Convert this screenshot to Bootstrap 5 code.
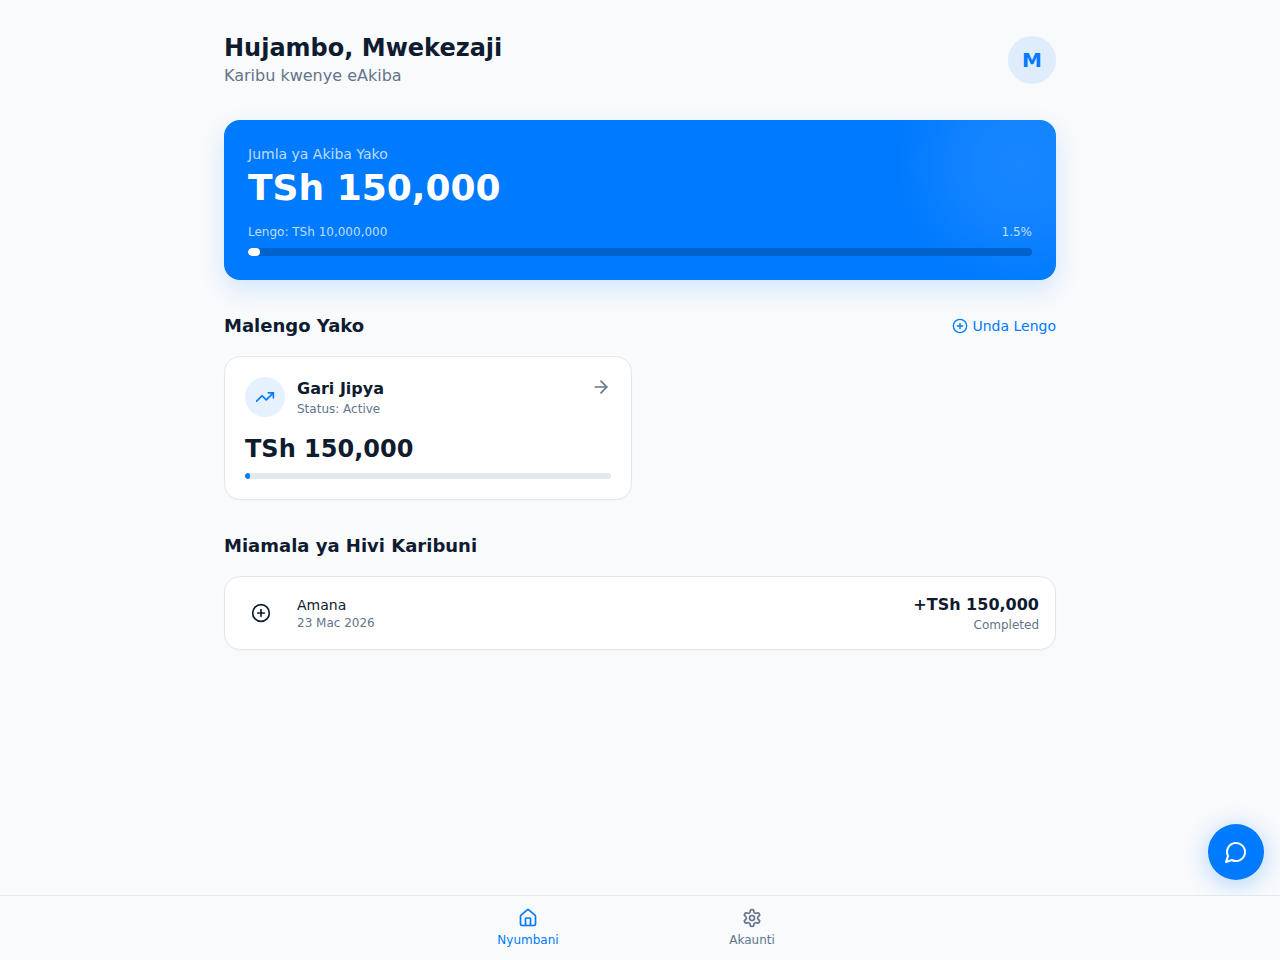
<!DOCTYPE html>
<html lang="sw">
<head>
  <meta charset="UTF-8" />
  <meta name="viewport" content="width=device-width, initial-scale=1.0"/>
  <title>eAkiba</title>
  <link href="https://cdn.jsdelivr.net/npm/bootstrap@5.3.0/dist/css/bootstrap.min.css" rel="stylesheet">
  <style>
    body {
      background-color: #f8fafc;
      color: #0f1b2f;
      font-family: "DejaVu Sans", sans-serif;
      min-height: 100vh;
    }

    .page-wrap { max-width: 880px; margin: 0 auto; padding: 32px 24px 96px; }
    .text-soft { color: #64748b; }
    .text-brand { color: #007aff; }

    .page-title { font-size: 24px; line-height: 32px; font-weight: 700; margin: 0; }
    .page-sub { font-size: 16px; line-height: 24px; }

    .avatar-circle {
      width: 48px; height: 48px; border-radius: 50%;
      background-color: rgba(0, 122, 255, .1);
      color: #007aff; font-size: 20px; font-weight: 700;
    }

    .hero-card {
      height: 160px; padding: 24px; margin-top: 32px;
      border-radius: 16px; color: #fff;
      background: radial-gradient(circle at 796px 45px, rgba(255,255,255,.09) 0, rgba(255,255,255,.08) 45px, rgba(255,255,255,0) 125px), #007aff;
      box-shadow: 0 10px 25px rgba(0, 122, 255, .15);
    }
    .hero-label { font-size: 14px; line-height: 20px; color: rgba(255,255,255,.75); }
    .hero-amount { font-size: 36px; line-height: 48px; font-weight: 700; margin-bottom: 11px; }
    .hero-meta { font-size: 12px; line-height: 18px; color: rgba(255,255,255,.75); margin-bottom: 7px; }
    .hero-bar { height: 8px; background-color: #0062cc; border-radius: 4px; overflow: hidden; }
    .hero-bar div { height: 100%; background-color: #fff; border-radius: 4px; }

    .section-head { font-size: 18px; line-height: 28px; font-weight: 700; margin: 0; }
    .section-row { margin-top: 32px; margin-bottom: 16px; }
    .add-link { font-size: 14px; color: #007aff; text-decoration: none; }

    .goal-grid { display: grid; grid-template-columns: repeat(2, 1fr); gap: 16px; }
    .goal-card, .tx-card {
      background-color: #fff; border: 1px solid #e2e8f0; border-radius: 16px;
      box-shadow: 0 1px 2px rgba(0,0,0,.03);
    }
    .goal-card { padding: 20px; height: 144px; }
    .goal-icon {
      width: 40px; height: 40px; border-radius: 50%;
      background-color: rgba(0, 122, 255, .1); color: #007aff;
    }
    .goal-name { font-size: 16px; line-height: 24px; font-weight: 700; }
    .goal-status { font-size: 12px; line-height: 16px; color: #64748b; }
    .goal-amount { font-size: 24px; line-height: 32px; font-weight: 700; margin-top: 16px; margin-bottom: 8px; }
    .goal-bar { height: 6px; background-color: #e2e8f0; border-radius: 3px; overflow: hidden; }
    .goal-bar div { height: 100%; background-color: #007aff; border-radius: 3px; }

    .tx-card { padding: 16px; height: 74px; }
    .tx-icon { width: 40px; height: 40px; }
    .tx-name { font-size: 14px; line-height: 20px; }
    .tx-date { font-size: 12px; line-height: 16px; color: #64748b; }
    .tx-amount { font-size: 16px; line-height: 24px; font-weight: 700; }
    .tx-state { font-size: 12px; line-height: 16px; color: #64748b; }

    .bottom-bar { height: 65px; background-color: #f8fafc; border-top: 1px solid #e2e8f0; }
    .bottom-inner { max-width: 448px; margin: 0 auto; height: 100%; }
    .bottom-item { flex: 1 1 0; font-size: 12px; line-height: 16px; text-decoration: none; gap: 4px; padding-top: 12px; }

    .chat-fab {
      right: 16px; bottom: 80px; width: 56px; height: 56px; padding: 0;
      border: 0; border-radius: 50%;
      background-color: #007aff; color: #fff;
      box-shadow: 0 4px 24px rgba(0, 122, 255, .3);
    }
  </style>
</head>
<body>
  <div class="page-wrap">
    <header class="d-flex justify-content-between align-items-center">
      <div>
        <h1 class="page-title">Hujambo, Mwekezaji</h1>
        <div class="page-sub text-soft">Karibu kwenye eAkiba</div>
      </div>
      <div class="avatar-circle d-flex align-items-center justify-content-center">M</div>
    </header>

    <section class="hero-card">
      <div class="hero-label">Jumla ya Akiba Yako</div>
      <div class="hero-amount">TSh 150,000</div>
      <div class="hero-meta d-flex justify-content-between">
        <span>Lengo: TSh 10,000,000</span>
        <span>1.5%</span>
      </div>
      <div class="hero-bar"><div style="width: 1.5%"></div></div>
    </section>

    <div class="section-row d-flex justify-content-between align-items-center">
      <h2 class="section-head">Malengo Yako</h2>
      <a href="#" class="add-link d-flex align-items-center gap-1">
        <svg width="16" height="16" viewBox="0 0 24 24" fill="none" stroke="currentColor" stroke-width="2" stroke-linecap="round" stroke-linejoin="round"><circle cx="12" cy="12" r="10"/><path d="M8 12h8"/><path d="M12 8v8"/></svg>
        Unda Lengo
      </a>
    </div>

    <div class="goal-grid">
      <div class="goal-card">
        <div class="d-flex justify-content-between align-items-start">
          <div class="d-flex gap-2 align-items-center">
            <div class="goal-icon d-flex align-items-center justify-content-center me-1">
              <svg width="20" height="20" viewBox="0 0 24 24" fill="none" stroke="currentColor" stroke-width="2" stroke-linecap="round" stroke-linejoin="round"><path d="M16 7h6v6"/><path d="m22 7-8.5 8.5-5-5L2 17"/></svg>
            </div>
            <div>
              <div class="goal-name">Gari Jipya</div>
              <div class="goal-status">Status: Active</div>
            </div>
          </div>
          <svg class="text-soft" width="20" height="20" viewBox="0 0 24 24" fill="none" stroke="currentColor" stroke-width="2" stroke-linecap="round" stroke-linejoin="round"><path d="M5 12h14"/><path d="m12 5 7 7-7 7"/></svg>
        </div>
        <div class="goal-amount">TSh 150,000</div>
        <div class="goal-bar"><div style="width: 1.5%"></div></div>
      </div>
    </div>

    <div class="section-row">
      <h2 class="section-head">Miamala ya Hivi Karibuni</h2>
    </div>

    <div class="tx-card d-flex justify-content-between align-items-center">
      <div class="d-flex align-items-center gap-2">
        <div class="tx-icon d-flex align-items-center justify-content-center me-2">
          <svg width="20" height="20" viewBox="0 0 24 24" fill="none" stroke="currentColor" stroke-width="2" stroke-linecap="round" stroke-linejoin="round"><circle cx="12" cy="12" r="10"/><path d="M8 12h8"/><path d="M12 8v8"/></svg>
        </div>
        <div>
          <div class="tx-name">Amana</div>
          <div class="tx-date">23 Mac 2026</div>
        </div>
      </div>
      <div class="text-end">
        <div class="tx-amount">+TSh 150,000</div>
        <div class="tx-state">Completed</div>
      </div>
    </div>
  </div>

  <button class="chat-fab position-fixed d-flex align-items-center justify-content-center" type="button" aria-label="Chat">
    <svg width="24" height="24" viewBox="0 0 24 24" fill="none" stroke="currentColor" stroke-width="2" stroke-linecap="round" stroke-linejoin="round"><path d="M7.9 20A9 9 0 1 0 4 16.1L2 22Z"/></svg>
  </button>

  <nav class="bottom-bar fixed-bottom">
    <div class="bottom-inner d-flex">
      <a href="#" class="bottom-item text-brand d-flex flex-column align-items-center">
        <svg width="20" height="20" viewBox="0 0 24 24" fill="none" stroke="currentColor" stroke-width="2" stroke-linecap="round" stroke-linejoin="round"><path d="M15 21v-8a1 1 0 0 0-1-1h-4a1 1 0 0 0-1 1v8"/><path d="M3 10a2 2 0 0 1 .709-1.528l7-5.999a2 2 0 0 1 2.582 0l7 5.999A2 2 0 0 1 21 10v9a2 2 0 0 1-2 2H5a2 2 0 0 1-2-2z"/></svg>
        Nyumbani
      </a>
      <a href="#" class="bottom-item text-soft d-flex flex-column align-items-center">
        <svg width="20" height="20" viewBox="0 0 24 24" fill="none" stroke="currentColor" stroke-width="2" stroke-linecap="round" stroke-linejoin="round"><path d="M12.22 2h-.44a2 2 0 0 0-2 2v.18a2 2 0 0 1-1 1.73l-.43.25a2 2 0 0 1-2 0l-.15-.08a2 2 0 0 0-2.73.73l-.22.38a2 2 0 0 0 .73 2.73l.15.1a2 2 0 0 1 1 1.72v.51a2 2 0 0 1-1 1.74l-.15.09a2 2 0 0 0-.73 2.73l.22.38a2 2 0 0 0 2.73.73l.15-.08a2 2 0 0 1 2 0l.43.25a2 2 0 0 1 1 1.73V20a2 2 0 0 0 2 2h.44a2 2 0 0 0 2-2v-.18a2 2 0 0 1 1-1.73l.43-.25a2 2 0 0 1 2 0l.15.08a2 2 0 0 0 2.73-.73l.22-.39a2 2 0 0 0-.73-2.73l-.15-.08a2 2 0 0 1-1-1.74v-.5a2 2 0 0 1 1-1.74l.15-.09a2 2 0 0 0 .73-2.73l-.22-.38a2 2 0 0 0-2.73-.73l-.15.08a2 2 0 0 1-2 0l-.43-.25a2 2 0 0 1-1-1.73V4a2 2 0 0 0-2-2z"/><circle cx="12" cy="12" r="3"/></svg>
        Akaunti
      </a>
    </div>
  </nav>
</body>
</html>
